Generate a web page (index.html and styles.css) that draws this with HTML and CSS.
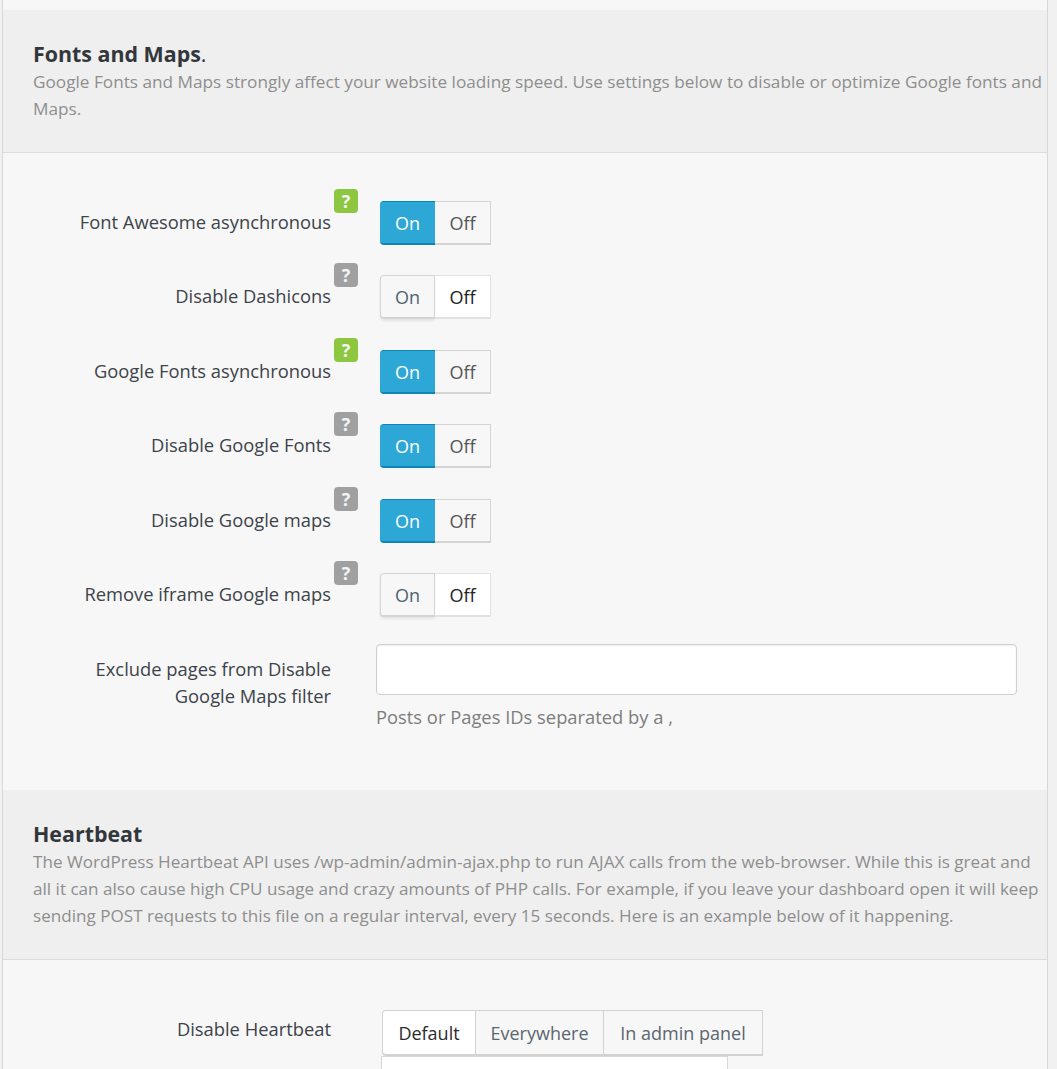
FILE: index.html
```html
<!DOCTYPE html>
<html lang="en">
<head>
<meta charset="utf-8">
<title>Fonts and Maps</title>
<link rel="stylesheet" href="styles.css">
</head>
<body>
<main class="panel">
  <header class="head head-fonts">
    <h2 class="title">Fonts and Maps<span class="dot">.</span></h2>
    <p class="desc">Google Fonts and Maps strongly affect your website loading speed. Use settings below to disable or optimize Google fonts and Maps.</p>
  </header>
  <section class="body-fonts">
    <div class="row">
      <div class="label">Font Awesome asynchronous<span class="badge green">?</span></div>
      <div class="switch"><span class="opt on active">On</span><span class="opt off">Off</span></div>
    </div>
    <div class="row">
      <div class="label">Disable Dashicons<span class="badge grey">?</span></div>
      <div class="switch"><span class="opt on">On</span><span class="opt off selected">Off</span></div>
    </div>
    <div class="row">
      <div class="label">Google Fonts asynchronous<span class="badge green">?</span></div>
      <div class="switch"><span class="opt on active">On</span><span class="opt off">Off</span></div>
    </div>
    <div class="row">
      <div class="label">Disable Google Fonts<span class="badge grey">?</span></div>
      <div class="switch"><span class="opt on active">On</span><span class="opt off">Off</span></div>
    </div>
    <div class="row">
      <div class="label">Disable Google maps<span class="badge grey">?</span></div>
      <div class="switch"><span class="opt on active">On</span><span class="opt off">Off</span></div>
    </div>
    <div class="row row-last">
      <div class="label">Remove iframe Google maps<span class="badge grey">?</span></div>
      <div class="switch"><span class="opt on">On</span><span class="opt off selected">Off</span></div>
    </div>
    <div class="row row-input">
      <div class="label label-wrap">Exclude pages from Disable Google Maps filter</div>
      <div class="field">
        <input class="text-input" type="text" aria-label="Exclude pages">
        <p class="help">Posts or Pages IDs separated by a ,</p>
      </div>
    </div>
  </section>
  <header class="head head-beat">
    <h2 class="title">Heartbeat</h2>
    <p class="desc desc-beat">The WordPress Heartbeat API uses /wp-admin/admin-ajax.php to run AJAX calls from the web-browser. While this is great and all it can also cause high CPU usage and crazy amounts of PHP calls. For example, if you leave your dashboard open it will keep sending POST requests to this file on a regular interval, every 15 seconds. Here is an example below of it happening.</p>
  </header>
  <section class="body-beat">
    <div class="label label-beat">Disable Heartbeat</div>
    <div class="beat-control">
      <div class="tabs">
        <span class="tab tab-default selected">Default</span><span class="tab tab-every">Everywhere</span><span class="tab tab-admin">In admin panel</span>
      </div>
      <div class="beat-box"></div>
    </div>
  </section>
</main>
</body>
</html>
```
FILE: styles.css
```css
* { box-sizing: border-box; }
html, body { margin: 0; height: 1069px; overflow: hidden; }
body {
  background: #f1f1f1;
  font-family: "Open Sans", "Noto Sans", sans-serif;
  font-size: 18px;
  color: #3c434a;
}
.panel {
  margin-left: 2px;
  width: 1046px;
  height: 1069px;
  padding-top: 10px;
  background: #f7f7f7;
  border-left: 1px solid #d8d8d8;
  border-right: 1px solid #d8d8d8;
}
.head {
  background: #efefef;
  padding: 29px 0 0 30px;
  border-bottom: 1px solid #dcdcdc;
}
.head-fonts { height: 143px; }
.head-beat { height: 170px; }
.title {
  margin: 0;
  font-size: 21.4px;
  line-height: 29px;
  font-weight: 700;
  color: #32373c;
}
.dot { font-weight: 400; }
.desc {
  margin: 0;
  font-size: 17.2px;
  line-height: 27px;
  color: #8e8e8e;
}
.desc-beat { font-size: 17.1px; }
.body-fonts { height: 637px; padding-top: 48px; }
.row {
  display: flex;
  align-items: flex-start;
  height: 74.4px;
}
.row-last { height: 71.4px; }
.label {
  position: relative;
  width: 328px;
  text-align: right;
  font-size: 18.35px;
  line-height: 27px;
  padding-top: 7px;
  color: #3c434a;
}
.label-wrap { padding-left: 60px; padding-top: 11px; }
.badge {
  position: absolute;
  left: 331px;
  top: -12px;
  width: 24px;
  height: 24px;
  border-radius: 4px;
  color: #f4f4f4;
  font-size: 18px;
  font-weight: 700;
  line-height: 24px;
  text-align: center;
}
.green { background: #8dc63f; }
.grey { background: #a0a0a0; }
.switch {
  display: flex;
  margin-left: 49px;
  width: 111px;
  height: 44px;
  font-size: 18px;
}
.opt {
  display: flex;
  align-items: center;
  justify-content: center;
  height: 44px;
  padding-top: 1px;
  border: 1px solid #d4d4d4;
  border-bottom-width: 2px;
}
.on {
  width: 55px;
  border-radius: 4px 0 0 4px;
  background: #f7f7f7;
  color: #4d6472;
  box-shadow: 0 2px 3px rgba(0,0,0,.08);
}
.off {
  width: 56px;
  border-left: 0;
  background: #f7f7f7;
  color: #555;
}
.on.active {
  background: #2ca7d6;
  border: 0;
  border-top: 1px solid #0e86b5;
  border-bottom: 2px solid #0e86b5;
  color: #fff;
  box-shadow: none;
}
.off.selected {
  background: #fff;
  color: #222;
  border-color: #e2e2e2;
}
.row-input { height: auto; }
.field { margin-left: 45px; }
.text-input {
  display: block;
  width: 641px;
  height: 51px;
  background: #fff;
  border: 1px solid #cfcfcf;
  border-radius: 4px;
  box-shadow: inset 0 1px 2px rgba(0,0,0,.07);
}
.help {
  margin: 8px 0 0;
  font-size: 18.35px;
  line-height: 27px;
  color: #7d7d7d;
}
.body-beat {
  display: flex;
  align-items: flex-start;
  padding-top: 50px;
}
.label-beat { padding-top: 5px; }
.beat-control { margin-left: 51px; }
.tabs {
  display: flex;
  height: 46px;
  width: 381px;
  border: 1px solid #d2d2d2;
  border-bottom-width: 2px;
  border-radius: 4px 0 0 4px;
}
.tab {
  display: flex;
  align-items: center;
  justify-content: center;
  font-size: 18px;
  color: #5a6670;
  border-right: 1px solid #d2d2d2;
}
.tab-default { width: 93px; }
.tab-every { width: 128px; }
.tab-admin { flex: 1; border-right: 0; }
.tab.selected { background: #fff; color: #2b2b2b; border-radius: 4px 0 0 4px; }
.beat-box {
  margin-left: -1px;
  width: 347px;
  height: 30px;
  background: #fff;
  border: 1px solid #d8d8d8;
}
```
